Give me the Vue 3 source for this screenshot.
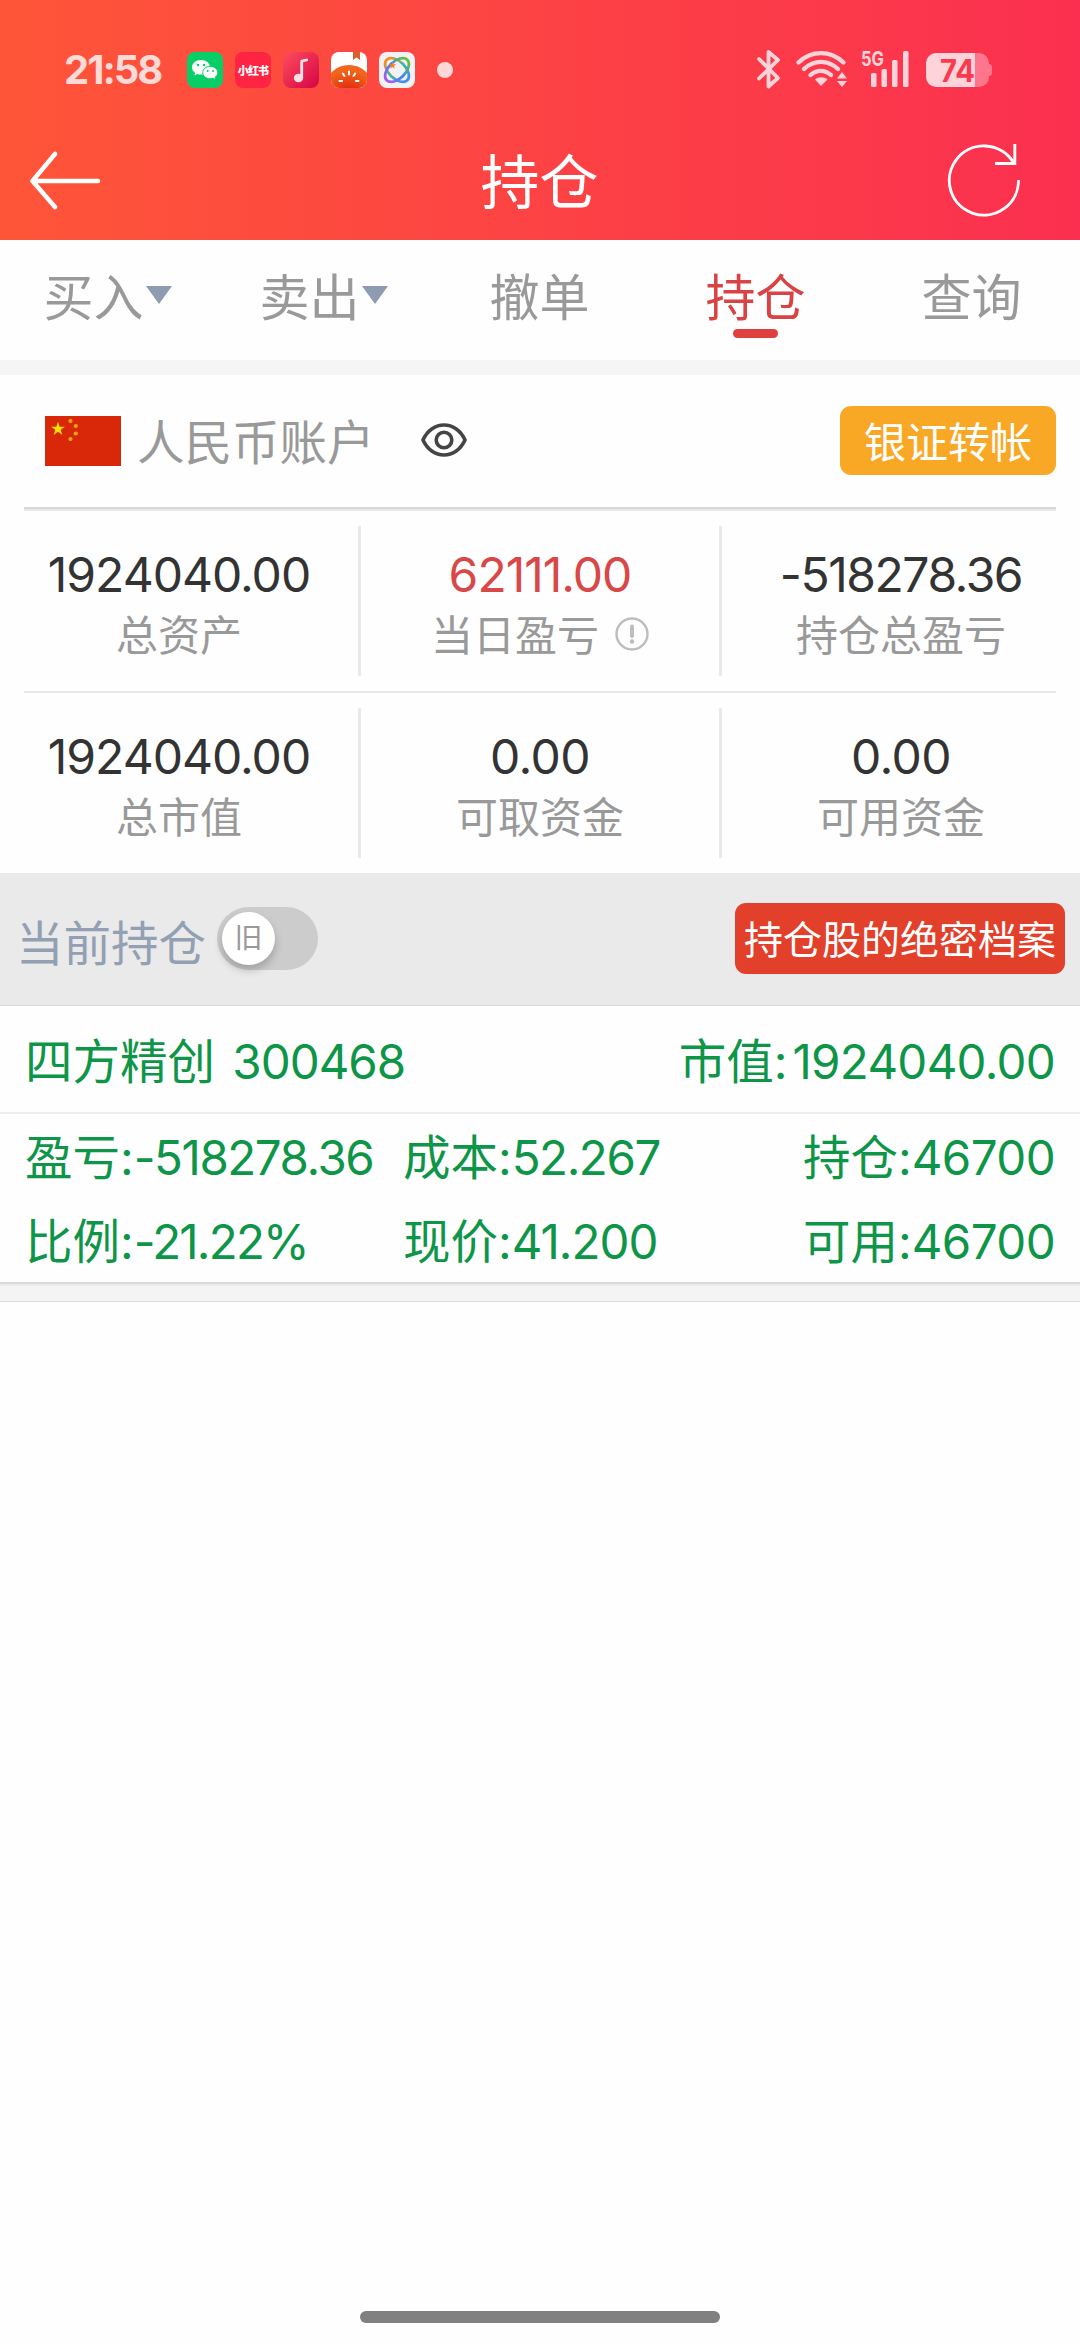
<script setup>
const tabs = [
  { label: '买入', arrow: true },
  { label: '卖出', arrow: true },
  { label: '撤单' },
  { label: '持仓', active: true },
  { label: '查询' },
]
const stats = [
  [
    { value: '1924040.00', label: '总资产', fit: 'snug' },
    { value: '62111.00', label: '当日盈亏', fit: 'snug', up: true, info: true },
    { value: '-518278.36', label: '持仓总盈亏', fit: 'tight' },
  ],
  [
    { value: '1924040.00', label: '总市值', fit: 'snug' },
    { value: '0.00', label: '可取资金', fit: 'slight' },
    { value: '0.00', label: '可用资金', fit: 'slight' },
  ],
]
const star = '0,-1 .225,-.309 .951,-.309 .363,.118 .588,.809 0,.382 -.588,.809 -.363,.118 -.951,-.309 -.225,-.309'
</script>

<template>
  <div class="page">
    <header class="top">
      <div class="status">
        <span class="clock">21:58</span>
        <div class="apps">
          <svg class="app" viewBox="0 0 36 36">
            <rect width="36" height="36" rx="8" fill="#08ce68" />
            <path d="M14 8c-5 0-9 3.200-9 7.300 0 2.300 1.200 4.300 3.200 5.600l-.8 2.600 3-1.500c1.200.4 2.400.6 3.600.6 5 0 9-3.200 9-7.300S19 8 14 8z" fill="#fff" />
            <circle cx="11" cy="13" r="1.200" fill="#08ce68" /><circle cx="17" cy="13" r="1.200" fill="#08ce68" />
            <path d="M23.200 14.400c-4.300 0-7.500 2.800-7.500 6.200s3.200 6.200 7.500 6.200c1 0 2-.2 2.900-.5l2.700 1.400-.7-2.400c1.700-1.100 2.700-2.800 2.700-4.700 0-3.400-3.300-6.200-7.600-6.200z" fill="#fff" stroke="#08ce68" stroke-width="1" />
            <circle cx="20.700" cy="19" r="1" fill="#08ce68" /><circle cx="26" cy="19" r="1" fill="#08ce68" />
          </svg>
          <span class="app book">小红书</span>
          <svg class="app" viewBox="0 0 36 36">
            <defs><linearGradient id="mu" x1="0" y1="0" x2="1" y2="1"><stop offset="0" stop-color="#ff4d5e" /><stop offset="1" stop-color="#d50345" /></linearGradient></defs>
            <rect width="36" height="36" rx="8" fill="url(#mu)" />
            <path d="M18.700 26V9l5-1" fill="none" stroke="#ffe6ea" stroke-width="2.800" stroke-linecap="round" stroke-linejoin="round" />
            <ellipse cx="15.500" cy="26" rx="4.700" ry="4.300" fill="#ffdfe4" />
          </svg>
          <svg class="app" viewBox="0 0 36 36">
            <defs>
              <clipPath id="tc"><rect width="36" height="36" rx="8" /></clipPath>
              <radialGradient id="tg" cx=".5" cy=".72" r=".6"><stop offset="0" stop-color="#d81b08" /><stop offset="1" stop-color="#f2661c" /></radialGradient>
            </defs>
            <g clip-path="url(#tc)">
              <rect width="36" height="36" fill="#fff" />
              <ellipse cx="18" cy="34" rx="23" ry="21" fill="url(#tg)" />
              <path d="M22 0h7v8l-3.500-2.500L22 8z" fill="#d9622b" />
              <path d="M18 19.500v3M11.800 21.500l1.700 2.500M24.200 21.500l-1.700 2.500M8.500 29h2.500M27.500 29H25" stroke="#fff" stroke-width="2" stroke-linecap="round" />
            </g>
          </svg>
          <svg class="app" viewBox="0 0 36 36">
            <defs><linearGradient id="kn" gradientUnits="userSpaceOnUse" x1="4" y1="18" x2="32" y2="18"><stop offset="0" stop-color="#ff8a1c" /><stop offset=".5" stop-color="#42b9a0" /><stop offset="1" stop-color="#3f8df5" /></linearGradient>
            <linearGradient id="km" gradientUnits="userSpaceOnUse" x1="32" y1="18" x2="4" y2="18"><stop offset="0" stop-color="#6abf3a" /><stop offset=".5" stop-color="#2f8df5" /><stop offset="1" stop-color="#a45cf0" /></linearGradient></defs>
            <rect width="36" height="36" rx="8" fill="#f2f2f4" />
            <g fill="none" stroke-width="2.800">
              <ellipse cx="18" cy="18" rx="14.500" ry="8.500" transform="rotate(45 18 18)" stroke="url(#kn)" />
              <ellipse cx="18" cy="18" rx="14.500" ry="8.500" transform="rotate(-45 18 18)" stroke="url(#km)" />
            </g>
            <polygon :points="star" transform="translate(13.500 13.500) scale(4)" fill="#ff7a1c" />
          </svg>
        </div>
        <i class="dot"></i>
        <div class="sys">
          <svg width="240" height="44" viewBox="756 48 240 44">
            <g fill="none" stroke="#ffd3da" stroke-linecap="round" stroke-linejoin="round">
              <path d="M759 59l19 19-9.500 8.500V52l9.500 8-19 18.500" stroke-width="3.800" />
              <path d="M798.500 62.500c13-12.500 32-12.500 45 0M804 69c10-9.500 24-9.500 34 0M810.500 75c6-5.500 14.500-5.500 20.500 0" stroke-width="4.400" />
            </g>
            <g fill="#ffd3da">
              <path d="M815 79.500c3.500-3 9-3 12.500 0L821 86z" />
              <path d="M837 78.500l5-6.500 5 6.500zM837 81h10l-5 6z" />
              <rect x="871" y="73" width="5.500" height="14" rx="1.500" /><rect x="881.500" y="69" width="5.500" height="18" rx="1.500" />
              <rect x="892" y="60" width="5.500" height="27" rx="1.500" /><rect x="903" y="51" width="5.500" height="36" rx="1.500" />
              <text x="861" y="66" font-size="20" font-weight="700" textLength="23" lengthAdjust="spacingAndGlyphs">5G</text>
              <path d="M936 53h39v34h-39a10 10 0 0 1-10-10V63a10 10 0 0 1 10-10z" />
            </g>
            <path d="M975 53h4a10 10 0 0 1 10 10v1q3 0 3 3v6q0 3-3 3v1a10 10 0 0 1-10 10h-4z" fill="#fd768b" />
            <text x="940" y="82" font-size="31" font-weight="700" fill="#fb394d" textLength="35" lengthAdjust="spacingAndGlyphs">74</text>
          </svg>
        </div>
      </div>
      <nav class="bar">
        <svg class="back" width="74" height="60" viewBox="0 0 74 60"><path d="M27 3L4.500 30 27 56M4.500 30H70" fill="none" stroke="#fff" stroke-width="4.500" stroke-linecap="round" stroke-linejoin="round" /></svg>
        <h1>持仓</h1>
        <svg class="refresh" width="76" height="76" viewBox="0 0 76 76"><path d="M72.500 37A34.600 34.600 0 1 1 67 18.800M68.800 1v19.500H49" fill="none" stroke="#fff" stroke-width="2.900" /></svg>
      </nav>
    </header>

    <nav class="tabs">
      <div v-for="t in tabs" :key="t.label" class="tab" :class="{ active: t.active }">
        <span>{{ t.label }}</span><i v-if="t.arrow" class="caret"></i>
      </div>
    </nav>
    <div class="strip"></div>

    <section class="account">
      <svg class="flag" width="76" height="50" viewBox="0 0 76 50">
        <rect width="76" height="50" fill="#d82709" />
        <g fill="#fde005">
          <polygon :points="star" transform="translate(13 13) scale(7.300)" />
          <g fill="#f3a80b">
            <circle cx="25.500" cy="5" r="2.100" /><circle cx="30.800" cy="10" r="2.100" /><circle cx="30.800" cy="17.500" r="2.100" /><circle cx="25.500" cy="23" r="2.100" />
          </g>
        </g>
      </svg>
      <span class="acct-name">人民币账户</span>
      <svg class="eye" width="46" height="34" viewBox="0 0 46 34"><g fill="none" stroke="#444" stroke-width="3.600"><path d="M2 17C11-3 35-3 44 17 35 37 11 37 2 17z" /><circle cx="23" cy="17" r="7.800" /></g></svg>
      <button class="transfer">银证转帐</button>
    </section>

    <section class="stats">
      <div v-for="(row, r) in stats" :key="r" class="stat-row">
        <div v-for="s in row" :key="s.label" class="stat">
          <b :class="[s.fit, { up: s.up }]">{{ s.value }}</b>
          <span class="lab">{{ s.label }}<svg v-if="s.info" class="info" width="34" height="34" viewBox="0 0 34 34"><circle cx="17" cy="17" r="15.500" fill="none" stroke="#bdbdbd" stroke-width="2.400" /><path d="M17 9.500v9.500" stroke="#bdbdbd" stroke-width="4" stroke-linecap="round" /><circle cx="17" cy="24.500" r="2.200" fill="#bdbdbd" /></svg></span>
        </div>
      </div>
    </section>

    <section class="current">
      <span class="cur-title">当前持仓</span>
      <div class="toggle"><span class="knob">旧</span></div>
      <button class="archive">持仓股的绝密档案</button>
    </section>

    <section class="holding">
      <div class="head"><span>四方精创 <em class="code snug">300468</em></span><span>市值:<em class="mv">1924040.00</em></span></div>
      <div class="grid">
        <span>盈亏:<em class="tight">-518278.36</em></span><span>成本:<em class="tight">52.267</em></span><span class="r">持仓:<em class="slight">46700</em></span>
        <span>比例:<em class="tighter">-21.22%</em></span><span>现价:<em class="snug">41.200</em></span><span class="r">可用:<em class="slight">46700</em></span>
      </div>
    </section>
    <div class="foot-strip"></div>
    <div class="home"></div>
  </div>
</template>

<style>
body { background: #fff; }
</style>

<style scoped>
.page { display: flex; flex-direction: column; width: 1080px; height: 2344px; background: #fefefe; font-family: Inter, "Noto Sans CJK SC", sans-serif; font-weight: 400; overflow: hidden; }
.page * { box-sizing: border-box; }
svg { display: block; flex: none; }
button { border: 0; padding: 0; font: inherit; white-space: nowrap; }
em { font-style: normal; }
.slight { letter-spacing: -.6px; }
.snug { letter-spacing: -1px; }
.tight { letter-spacing: -1.450px; }
.tighter { letter-spacing: -1.800px; }
.top { height: 240px; background: linear-gradient(90deg, #fe5538, #fb3050); color: #fff; }
.status { display: flex; align-items: center; height: 122px; padding: 18px 84px 0 64px; }
.clock { width: 123px; font-size: 40px; line-height: 40px; font-weight: 700; letter-spacing: -2px; color: #ffdad7; }
.apps { display: flex; gap: 12px; }
.app { width: 36px; height: 36px; }
.book { display: flex; align-items: center; justify-content: center; border-radius: 8px; background: #ff2442; font-size: 11px; font-weight: 900; letter-spacing: -.8px; white-space: nowrap; }
.dot { width: 16px; height: 16px; margin-left: 22px; border-radius: 50%; background: #ffd7d8; }
.sys { margin-left: auto; }
.bar { display: flex; align-items: center; justify-content: space-between; height: 118px; padding: 0 58px 0 28px; }
h1 { margin: 4px 0 0 15px; font-size: 59px; line-height: 60px; font-weight: 400; }
.back { margin-right: 16px; }
.refresh { margin-top: -1px; }
.tabs { display: flex; height: 120px; }
.tab { position: relative; display: flex; flex: 1; align-items: center; justify-content: center; padding: 0 1px 5px 0; font-size: 50px; line-height: 60px; color: #999; }
.caret { margin-left: 2px; margin-top: -5px; border: 13px solid transparent; border-top: 18px solid #8f9bb0; border-bottom: 0; }
.active { color: #d94343; }
.active::after { content: ""; position: absolute; left: 50%; top: 89px; width: 45px; height: 9px; margin-left: -23px; border-radius: 5px; background: #df4141; }
.strip { height: 15px; background: #f5f5f5; }
.account { display: flex; align-items: center; height: 136px; margin: 0 24px; padding: 0 0 1px 21px; border-bottom: 2px solid #e8e8e8; box-shadow: inset 0 -2px #d8d8d8; }
.flag { margin-top: -2px; }
.acct-name { margin: 3px 0 0 16px; font-size: 47.500px; line-height: 60px; color: #999; }
.eye { margin: -3px 0 0 46px; }
.transfer { width: 216px; height: 69px; margin: -3px 0 0 auto; border-radius: 11px; background: #f9a825; color: #fff; font-size: 42px; line-height: 73px; }
.stat-row { display: flex; height: 180px; }
.stat-row + .stat-row { height: 182px; padding-top: 2px; background: linear-gradient(#e8e8e8, #e8e8e8) 24px 0 / 1032px 2px no-repeat; }
.stat { display: flex; flex: 1; flex-direction: column; align-items: center; height: 150px; margin-top: 15px; padding-top: 19px; }
.stat + .stat { border-left: 3px solid #e9e9e9; }
.stat b { font-size: 48px; line-height: 60px; font-weight: 400; color: #333; }
.stat b.up { color: #d94848; }
.lab { display: flex; align-items: center; margin-top: 1px; font-size: 42px; line-height: 60px; color: #999; }
.info { margin: -4px 0 0 16px; }
.current { display: flex; align-items: center; height: 133px; padding: 0 15px 0 16px; background: #eaeaea; border-bottom: 1px solid #d9d9d9; }
.cur-title { margin-top: 9px; font-size: 47.500px; line-height: 60px; color: #939fb3; }
.toggle { width: 101px; height: 63px; margin: -2px 0 0 11px; padding: 5px; border-radius: 32px; background: #ccc; }
.knob { display: block; width: 53px; height: 53px; border-radius: 50%; background: #fff; box-shadow: 0 5px 9px rgba(0, 0, 0, .22); font-size: 28px; line-height: 53px; text-align: center; color: #999; }
.archive { width: 330px; height: 71px; margin: -2px 0 0 auto; border-radius: 11px; background: #e2402b; color: #fff; font-size: 39px; line-height: 74px; }
.holding { color: #0d9548; font-size: 47.500px; line-height: 84px; border-bottom: 2px solid #ebebeb; box-shadow: inset 0 -2px #d8d8d8; }
.head { display: flex; align-items: center; justify-content: space-between; height: 108px; padding: 5px 25px 0; border-bottom: 2px solid #eee; white-space: pre; }
.code { margin-left: 4px; }
.mv { margin-left: 5px; letter-spacing: -.7px; }
.grid { display: grid; grid-template-columns: 378px 1fr 300px; grid-auto-rows: 84px; height: 170px; padding: 2px 25px 0; white-space: nowrap; }
.r { text-align: right; }
.foot-strip { height: 16px; background: #f4f4f4; border-bottom: 1px solid #dcdcdc; }
.home { width: 360px; height: 12px; margin: auto auto 21px; border-radius: 6px; background: #808080; }
</style>
